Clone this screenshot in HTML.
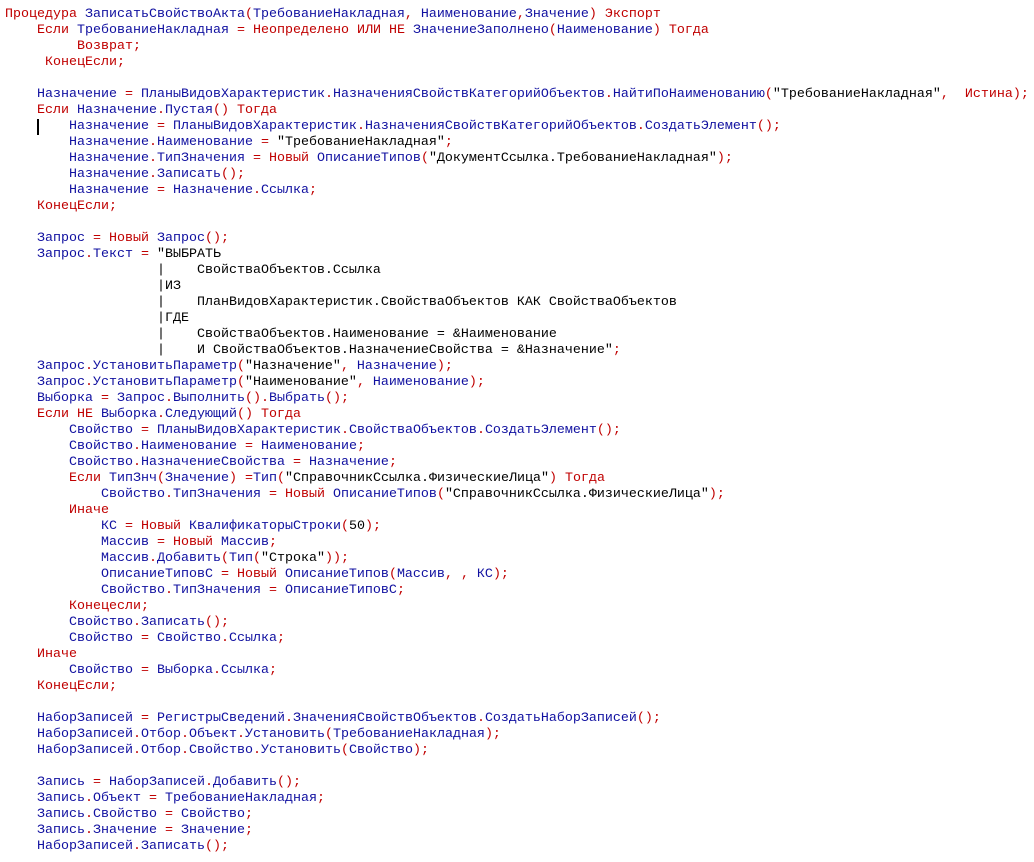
<!DOCTYPE html>
<html><head><meta charset="utf-8"><style>
html,body{margin:0;padding:0;background:#fff;width:1034px;height:862px;overflow:hidden}
pre{margin:0;padding:7px 0 0 5px;font-family:"Liberation Mono","DejaVu Sans Mono",monospace;font-size:13.33px;line-height:16px;color:#1010a0;position:relative}
r{color:#c00000}
t{color:#000}
.cur{position:absolute;left:37px;top:119px;width:2px;height:16px;background:#000}
</style></head><body>
<pre><div class="cur"></div><r>Процедура</r> ЗаписатьСвойствоАкта<r>(</r>ТребованиеНакладная<r>,</r> Наименование<r>,</r>Значение<r>)</r> <r>Экспорт</r>
    <r>Если</r> ТребованиеНакладная <r>=</r> <r>Неопределено</r> <r>ИЛИ</r> <r>НЕ</r> ЗначениеЗаполнено<r>(</r>Наименование<r>)</r> <r>Тогда</r>
         <r>Возврат;</r>
     <r>КонецЕсли;</r>

    Назначение <r>=</r> ПланыВидовХарактеристик<r>.</r>НазначенияСвойствКатегорийОбъектов<r>.</r>НайтиПоНаименованию<r>(</r><t>"ТребованиеНакладная"</t><r>,</r>  <r>Истина);</r>
    <r>Если</r> Назначение<r>.</r>Пустая<r>()</r> <r>Тогда</r>
        Назначение <r>=</r> ПланыВидовХарактеристик<r>.</r>НазначенияСвойствКатегорийОбъектов<r>.</r>СоздатьЭлемент<r>();</r>
        Назначение<r>.</r>Наименование <r>=</r> <t>"ТребованиеНакладная"</t><r>;</r>
        Назначение<r>.</r>ТипЗначения <r>=</r> <r>Новый</r> ОписаниеТипов<r>(</r><t>"ДокументСсылка.ТребованиеНакладная"</t><r>);</r>
        Назначение<r>.</r>Записать<r>();</r>
        Назначение <r>=</r> Назначение<r>.</r>Ссылка<r>;</r>
    <r>КонецЕсли;</r>

    Запрос <r>=</r> <r>Новый</r> Запрос<r>();</r>
    Запрос<r>.</r>Текст <r>=</r> <t>"ВЫБРАТЬ
                   |    СвойстваОбъектов.Ссылка
                   |ИЗ
                   |    ПланВидовХарактеристик.СвойстваОбъектов КАК СвойстваОбъектов
                   |ГДЕ
                   |    СвойстваОбъектов.Наименование = &amp;Наименование
                   |    И СвойстваОбъектов.НазначениеСвойства = &amp;Назначение"</t><r>;</r>
    Запрос<r>.</r>УстановитьПараметр<r>(</r><t>"Назначение"</t><r>,</r> Назначение<r>);</r>
    Запрос<r>.</r>УстановитьПараметр<r>(</r><t>"Наименование"</t><r>,</r> Наименование<r>);</r>
    Выборка <r>=</r> Запрос<r>.</r>Выполнить<r>().</r>Выбрать<r>();</r>
    <r>Если</r> <r>НЕ</r> Выборка<r>.</r>Следующий<r>()</r> <r>Тогда</r>
        Свойство <r>=</r> ПланыВидовХарактеристик<r>.</r>СвойстваОбъектов<r>.</r>СоздатьЭлемент<r>();</r>
        Свойство<r>.</r>Наименование <r>=</r> Наименование<r>;</r>
        Свойство<r>.</r>НазначениеСвойства <r>=</r> Назначение<r>;</r>
        <r>Если</r> ТипЗнч<r>(</r>Значение<r>)</r> <r>=</r>Тип<r>(</r><t>"СправочникСсылка.ФизическиеЛица"</t><r>)</r> <r>Тогда</r>
            Свойство<r>.</r>ТипЗначения <r>=</r> <r>Новый</r> ОписаниеТипов<r>(</r><t>"СправочникСсылка.ФизическиеЛица"</t><r>);</r>
        <r>Иначе</r>
            КС <r>=</r> <r>Новый</r> КвалификаторыСтроки<r>(</r><t>50</t><r>);</r>
            Массив <r>=</r> <r>Новый</r> Массив<r>;</r>
            Массив<r>.</r>Добавить<r>(</r>Тип<r>(</r><t>"Строка"</t><r>));</r>
            ОписаниеТиповС <r>=</r> <r>Новый</r> ОписаниеТипов<r>(</r>Массив<r>,</r> <r>,</r> КС<r>);</r>
            Свойство<r>.</r>ТипЗначения <r>=</r> ОписаниеТиповС<r>;</r>
        <r>Конецесли;</r>
        Свойство<r>.</r>Записать<r>();</r>
        Свойство <r>=</r> Свойство<r>.</r>Ссылка<r>;</r>
    <r>Иначе</r>
        Свойство <r>=</r> Выборка<r>.</r>Ссылка<r>;</r>
    <r>КонецЕсли;</r>

    НаборЗаписей <r>=</r> РегистрыСведений<r>.</r>ЗначенияСвойствОбъектов<r>.</r>СоздатьНаборЗаписей<r>();</r>
    НаборЗаписей<r>.</r>Отбор<r>.</r>Объект<r>.</r>Установить<r>(</r>ТребованиеНакладная<r>);</r>
    НаборЗаписей<r>.</r>Отбор<r>.</r>Свойство<r>.</r>Установить<r>(</r>Свойство<r>);</r>

    Запись <r>=</r> НаборЗаписей<r>.</r>Добавить<r>();</r>
    Запись<r>.</r>Объект <r>=</r> ТребованиеНакладная<r>;</r>
    Запись<r>.</r>Свойство <r>=</r> Свойство<r>;</r>
    Запись<r>.</r>Значение <r>=</r> Значение<r>;</r>
    НаборЗаписей<r>.</r>Записать<r>();</r></pre>
</body></html>
